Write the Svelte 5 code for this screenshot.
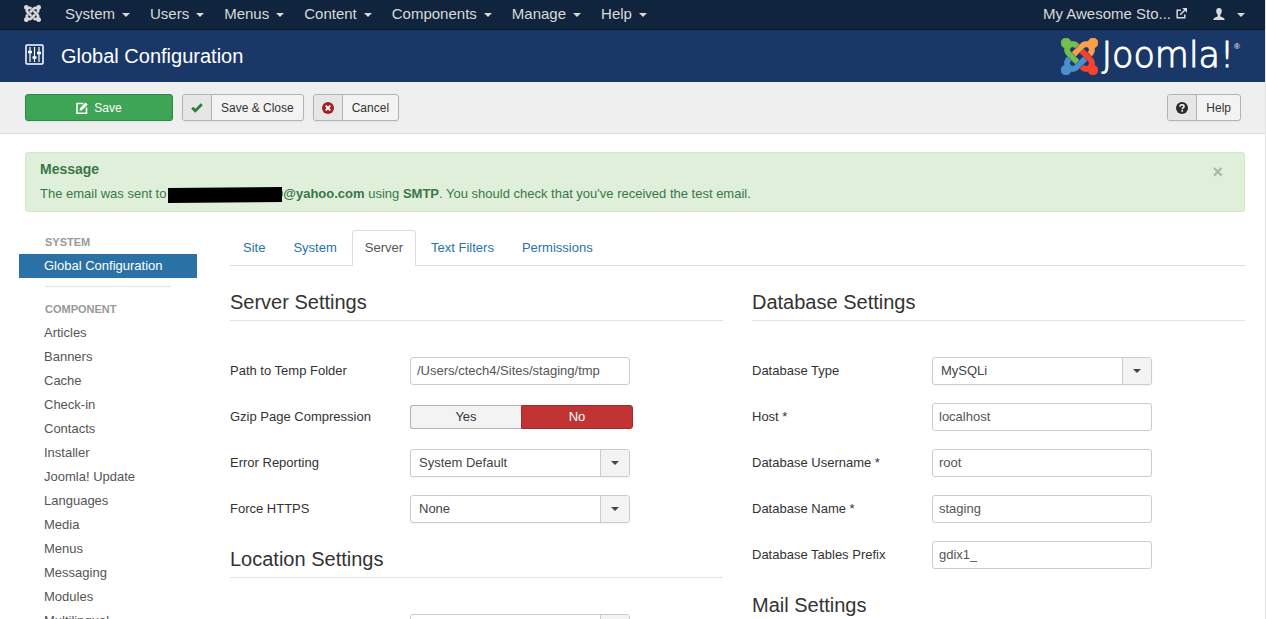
<script>
  const menus = ['System', 'Users', 'Menus', 'Content', 'Components', 'Manage', 'Help'];
  const components = [
    'Articles', 'Banners', 'Cache', 'Check-in', 'Contacts', 'Installer', 'Joomla! Update',
    'Languages', 'Media', 'Menus', 'Messaging', 'Modules', 'Multilingual'
  ];
  const tabs = ['Site', 'System', 'Server', 'Text Filters', 'Permissions'];
  const columns = [
    [
      {
        title: 'Server Settings',
        fields: [
          { id: 'tmp', label: 'Path to Temp Folder', type: 'text', value: '/Users/ctech4/Sites/staging/tmp' },
          { id: 'gzip', label: 'Gzip Page Compression', type: 'switch' },
          { id: 'errors', label: 'Error Reporting', type: 'select', value: 'System Default' },
          { id: 'https', label: 'Force HTTPS', type: 'select', value: 'None' }
        ]
      },
      {
        title: 'Location Settings',
        fields: [{ id: 'zone', label: '', type: 'select', value: '' }]
      }
    ],
    [
      {
        title: 'Database Settings',
        fields: [
          { id: 'dbtype', label: 'Database Type', type: 'select', value: 'MySQLi' },
          { id: 'host', label: 'Host *', type: 'text', value: 'localhost' },
          { id: 'user', label: 'Database Username *', type: 'text', value: 'root' },
          { id: 'db', label: 'Database Name *', type: 'text', value: 'staging' },
          { id: 'prefix', label: 'Database Tables Prefix', type: 'text', value: 'gdix1_' }
        ]
      },
      { title: 'Mail Settings', fields: [] }
    ]
  ];
  // One arm of the mark; the other three are quarter turns of it.
  const arm =
    'M16.719 14.759L14.22 17.26l-2.37 2.37-.462.466c-1.368 1.365-3.297 1.83-5.047 1.397-.327 1.424-1.604 2.49-3.13 2.49C1.438 23.983 0 22.547 0 20.772c0-1.518 1.055-2.79 2.469-3.128-.446-1.76.016-3.705 1.396-5.08l.179-.18 2.37 2.37-.184.181c-.769.779-.769 2.024 0 2.789.771.78 2.022.78 2.787 0l.465-.465 2.367-2.371 2.502-2.506z';
</script>

{#snippet mark(size, colors)}
  <svg class="mark" width={size} height={size} viewBox="0 0 24 24" aria-hidden="true">
    {#each colors as color, i}
      <path d={arm} fill={color} stroke={color} stroke-width="0.5" transform={`rotate(${i * 90} 12 12)`} />
    {/each}
  </svg>
{/snippet}

<div class="page">
  <nav class="navbar">
    <a class="brand" href="#home" aria-label="Control panel">
      {@render mark(17, ['#d9d9d9', '#d9d9d9', '#d9d9d9', '#d9d9d9'])}
    </a>
    {#each menus as menu}
      <a class="menu" href="#menu">{menu}<span class="caret"></span></a>
    {/each}
    <a class="menu site" href="#site">My Awesome Sto...
      <svg width="11" height="11" viewBox="0 0 11 11" fill="none" stroke="currentColor" stroke-width="1.5" aria-hidden="true">
        <path d="M5 2.2H1.2v7.6h7.6V6.5M4.2 6.8l5-5" />
        <path d="M6.2 0H11v4.8z" fill="currentColor" stroke="none" />
      </svg>
    </a>
    <a class="menu user" href="#user" aria-label="User menu">
      <svg width="12" height="12" viewBox="0 0 12 12" fill="currentColor" aria-hidden="true">
        <path d="M6 0c1.8 0 2.8 1.2 2.8 3 0 1.6-.7 3-1.5 3.7v1.2c0 .5.5.7 1.3 1 1.8.6 3 1 3 3.100H.4c0-2.100 1.200-2.500 3-3.100.8-.3 1.300-.5 1.300-1V6.700C3.900 6 3.200 4.600 3.200 3 3.200 1.200 4.200 0 6 0z" />
      </svg><span class="caret"></span>
    </a>
  </nav>

  <header class="header">
    <svg class="equalizer" width="20" height="21" viewBox="0 0 20 21" fill="none" stroke="#fff" aria-hidden="true">
      <rect x="1" y="1" width="17" height="19" rx="1" stroke-width="1.5" />
      <path d="M5 3v15M9.500 3v15M14 3v15" stroke-width="1.2" />
      <path d="M3 8h4M7.500 13.500h4M12 9h4" stroke-width="2.500" />
    </svg>
    <h1>Global Configuration</h1>
    <div class="logo">
      {@render mark(37, ['#4a90d0', '#74bd52', '#fba04a', '#fa4130'])}
      <span class="word">Joomla!</span><sup>®</sup>
    </div>
  </header>

  <div class="toolbar">
    <button class="btn save">
      <svg width="12" height="12" viewBox="0 0 12 12" fill="none" stroke="#fff" stroke-width="1.6" aria-hidden="true">
        <path d="M7.500 1.500H1v9.700h9.500V5.500" />
        <path d="M3.500 8.700l.5-2.600L9.700.4l2 2L6 8.200z" fill="#fff" stroke="none" />
      </svg>Save
    </button>
    <button class="btn">
      <span class="ico"><svg width="12" height="10" viewBox="0 0 12 10" aria-hidden="true"><path d="M1.200 4.700l3.100 3.100L10.800 1.300" fill="none" stroke="#2b8040" stroke-width="2.8" /></svg></span>
      <span class="txt">Save &amp; Close</span>
    </button>
    <button class="btn">
      <span class="ico"><svg width="12" height="12" viewBox="0 0 12 12" aria-hidden="true"><circle cx="6" cy="6" r="6" fill="#9d2426" /><path d="M3.700 3.700l4.600 4.600M8.300 3.700L3.700 8.300" stroke="#fff" stroke-width="1.8" /></svg></span>
      <span class="txt">Cancel</span>
    </button>
    <button class="btn help">
      <span class="ico"><svg width="12" height="12" viewBox="0 0 12 12" aria-hidden="true"><circle cx="6" cy="6" r="6" fill="#2b2b2b" /><path d="M4 4.700C4 3.300 4.900 2.700 6 2.700s2.100.6 2.100 1.700C8.100 5.700 6.200 5.700 6.200 7.200M6.200 8.100v1.600" fill="none" stroke="#fff" stroke-width="1.5" /></svg></span>
      <span class="txt">Help</span>
    </button>
  </div>

  <main>
    <section class="alert" role="status">
      <button class="close" aria-label="Close">×</button>
      <h4>Message</h4>
      <p>The email was sent to <svg class="redacted" width="114" height="16" viewBox="0 0 114 16" aria-hidden="true"><path d="M0 1L114 0v15L0 16z" /></svg><b>0@yahoo.com</b> using <b>SMTP</b>. You should check that you've received the test email.</p>
    </section>

    <div class="body">
      <aside>
        <h5>System</h5>
        <a class="current" href="#config">Global Configuration</a>
        <hr />
        <h5>Component</h5>
        {#each components as item}
          <a href="#component">{item}</a>
        {/each}
      </aside>

      <div class="content">
        <nav class="tabs">
          {#each tabs as tab}
            <a href="#tab" class:active={tab === 'Server'}>{tab}</a>
          {/each}
        </nav>
        <form class="columns">
          {#each columns as groups}
            <div>
              {#each groups as group}
                <h3>{group.title}</h3>
                {#each group.fields as field}
                  <div class="row">
                    {#if field.type === 'switch'}
                      <span class="label" id={field.id}>{field.label}</span>
                      <div class="switch" role="radiogroup" aria-labelledby={field.id}>
                        <label><input type="radio" name={field.id} />Yes</label>
                        <label class="no"><input type="radio" name={field.id} checked />No</label>
                      </div>
                    {:else}
                      <label class="label" for={field.id}>{field.label}</label>
                      {#if field.type === 'select'}
                        <div class="select">
                          <select id={field.id}><option>{field.value}</option></select>
                          <span class="arrow"><span class="caret"></span></span>
                        </div>
                      {:else}
                        <input class="text" type="text" id={field.id} value={field.value} />
                      {/if}
                    {/if}
                  </div>
                {/each}
              {/each}
            </div>
          {/each}
        </form>
      </div>
    </div>
  </main>
</div>

<style>
  :global(html) { scrollbar-width: none; }
  :global(body) { background: #fff; }
  .page {
    border-right: 1px solid #e2e2e2;
    font: 13px/18px "Liberation Sans", Arial, sans-serif;
    color: #333;
  }
  .page, .page * { box-sizing: border-box; }
  a { text-decoration: none; }
  h1, h3, h4, h5, p { margin: 0; font-weight: normal; }
  svg { flex: none; }
  button, input, select { font: inherit; color: inherit; }

  .caret {
    border: 4px solid transparent;
    border-top-color: currentColor;
    border-bottom: 0;
  }

  .navbar {
    display: flex;
    height: 30px;
    padding: 0 10px 2px 24px;
    background: #10243d;
    border-bottom: 1px solid #0a1729;
  }
  .brand { display: flex; align-items: center; padding-right: 14px; }
  .menu {
    display: flex;
    align-items: center;
    gap: 7px;
    padding: 0 10px;
    font-size: 15px;
    color: #d9d9d9;
  }
  .menu .caret { margin-top: 2px; }
  .site { margin-left: auto; gap: 5px; padding-right: 16px; }
  .user { gap: 12px; }

  .header {
    display: flex;
    align-items: center;
    height: 52px;
    padding: 0 25px;
    background: #1a3867;
    color: #fff;
  }
  .equalizer { margin-bottom: 3px; }
  h1 { margin-left: 16px; font-size: 20px; line-height: 36px; }
  .logo { display: flex; align-items: center; margin-left: auto; }
  .word {
    margin-left: 4px;
    padding-bottom: 3px;
    font: 200 35px/36px "DejaVu Sans Light", "DejaVu Sans", sans-serif;
    -webkit-text-stroke: 1px #fff;
  }
  sup { align-self: flex-start; font-size: 8px; line-height: 20px; }

  .toolbar {
    display: flex;
    gap: 9px;
    padding: 12px 24px 12px 25px;
    background: #efefef;
    border-bottom: 1px solid #dedede;
  }
  .btn {
    display: flex;
    height: 27px;
    padding: 0;
    border: 1px solid #b3b3b3;
    border-radius: 3px;
    background: #f3f3f3;
    font-size: 12px;
    line-height: 26px;
    box-shadow: 0 1px 2px rgba(0, 0, 0, 0.05);
    overflow: hidden;
  }
  .save {
    width: 148px;
    justify-content: center;
    align-items: center;
    gap: 6px;
    background: #3ea556;
    border-color: #2d8a42;
    color: #fff;
  }
  .ico {
    display: flex;
    align-items: center;
    justify-content: center;
    width: 29px;
    height: 25px;
    background: #e6e6e6;
    border-right: 1px solid #b3b3b3;
  }
  .txt { padding: 0 9px; }
  .help { margin-left: auto; }

  main { padding: 18px 20px 0 25px; }
  .alert {
    height: 60px;
    padding: 7px 14px;
    background: #dfefda;
    border: 1px solid #d3e8c8;
    border-radius: 3px;
    color: #3a7748;
  }
  .alert h4 { margin-bottom: 7px; font-size: 14px; font-weight: bold; }
  .close {
    float: right;
    margin: 3px 7px 0 0;
    padding: 0;
    border: 0;
    background: none;
    font-size: 18px;
    font-weight: bold;
    color: #a9b8a5;
  }
  .redacted { position: relative; margin: 0 -6px 0 -2px; vertical-align: -5px; }

  .body { display: flex; gap: 33px; padding-top: 18px; }
  aside { width: 178px; margin-left: -6px; padding-top: 3px; }
  aside h5 {
    padding: 0 26px;
    font-size: 11px;
    font-weight: bold;
    text-transform: uppercase;
    color: #999;
  }
  aside a {
    display: block;
    padding: 3px 25px;
    color: #555;
  }
  aside a.current { background: #2a72a6; color: #fff; }
  aside hr {
    margin: 8px 26px 13px;
    border: 0;
    border-top: 1px solid #e3e3e3;
  }
  aside h5 + a { margin-top: 3px; }

  .content { flex: 1; min-width: 0; }
  .tabs { display: flex; gap: 2px; border-bottom: 1px solid #ddd; }
  .tabs a {
    margin-bottom: -1px;
    padding: 8px 12px;
    border: 1px solid transparent;
    border-radius: 4px 4px 0 0;
    color: #2a72a6;
  }
  .tabs a.active {
    background: #fff;
    border-color: #ddd;
    border-bottom-color: #fff;
    color: #555;
  }
  .columns {
    display: grid;
    grid-template-columns: 1fr 1fr;
    gap: 29px;
    padding-top: 18px;
  }
  h3 {
    margin-bottom: 36px;
    border-bottom: 1px solid #e3e3e3;
    font-size: 20px;
    line-height: 36px;
  }
  .row { display: flex; align-items: center; height: 28px; margin-bottom: 18px; }
  .label { width: 180px; }
  .text, .select {
    width: 220px;
    height: 28px;
    border: 1px solid #ccc;
    border-radius: 3px;
    background: #fff;
    color: #555;
  }
  .text { padding: 3px 6px 5px; }
  .select {
    display: flex;
    color: #444;
    box-shadow: 0 1px 2px rgba(0, 0, 0, 0.05);
  }
  select {
    appearance: none;
    flex: 1;
    padding: 0 8px;
    border: 0;
    background: none;
  }
  .arrow {
    display: flex;
    align-items: center;
    justify-content: center;
    width: 29px;
    background: #f3f3f3;
    border-left: 1px solid #ccc;
    border-radius: 0 2px 2px 0;
    pointer-events: none;
  }
  .switch { display: flex; }
  .switch label {
    position: relative;
    width: 111px;
    height: 24px;
    border: 1px solid #b3b3b3;
    border-right: 0;
    border-radius: 3px 0 0 3px;
    background: #f3f3f3;
    line-height: 22px;
    text-align: center;
  }
  .switch label.no {
    width: 112px;
    border: 1px solid #a02a2a;
    border-radius: 0 3px 3px 0;
    background: #c23333;
    color: #fff;
  }
  .switch input { position: absolute; margin: 0; opacity: 0; }
</style>
